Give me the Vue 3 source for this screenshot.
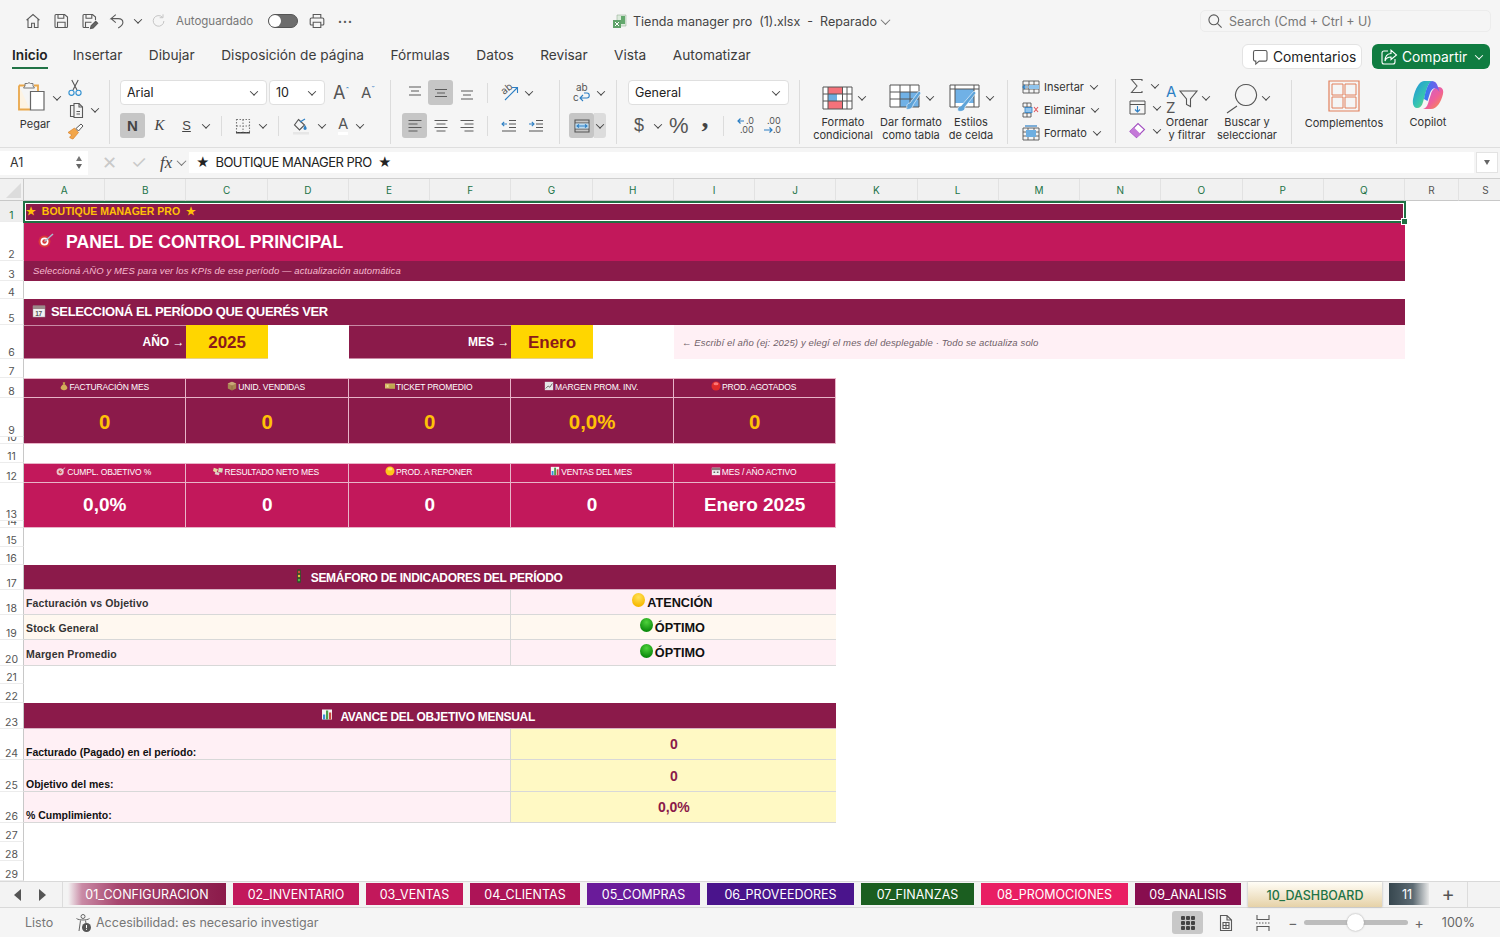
<template>
  <div class="app">
    <!-- barra de titulo -->
    <header class="titlebar">
      <div class="qa">
        <svg class="i" width="18" height="18" viewBox="0 0 18 18" v-html="ico.home"></svg>
        <svg class="i" width="18" height="18" viewBox="0 0 18 18" v-html="ico.save"></svg>
        <svg class="i" width="18" height="18" viewBox="0 0 18 18" v-html="ico.saveas"></svg>
        <svg class="i" width="18" height="18" viewBox="0 0 18 18" v-html="ico.undo"></svg>
        <span class="chev qa-chev"></span>
        <svg class="i redo" width="16" height="16" viewBox="0 0 18 18" v-html="ico.redo"></svg>
        <span class="auto">Autoguardado</span>
        <span class="toggle"><span class="knob"></span></span>
        <svg class="i" width="18" height="18" viewBox="0 0 18 18" v-html="ico.print"></svg>
        <span class="dots">•••</span>
      </div>
      <div class="doc">
        <svg width="16" height="16" viewBox="0 0 16 16" v-html="ico.xl"></svg>
        <span>Tienda manager pro&nbsp; (1).xlsx&nbsp; -&nbsp; Reparado</span>
        <span class="chev thin"></span>
      </div>
      <div class="search">
        <svg class="i" width="16" height="16" viewBox="0 0 16 16" v-html="ico.lens"></svg>
        <span>Search (Cmd + Ctrl + U)</span>
      </div>
    </header>

    <!-- pestañas del ribbon -->
    <nav class="menu">
      <span v-for="(m, n) in menu" :key="m" class="menu-item" :class="{ on: n === 0 }">{{ m }}</span>
      <div class="menu-right">
        <button class="btn-com">
          <svg class="i" width="18" height="18" viewBox="0 0 18 18" v-html="ico.comment"></svg>Comentarios
        </button>
        <button class="btn-share">
          <svg width="18" height="18" viewBox="0 0 18 18" v-html="ico.share"></svg>Compartir<span class="chev white"></span>
        </button>
      </div>
    </nav>

    <!-- ribbon -->
    <section class="ribbon">
      <div class="grp g-clip">
        <div class="paste">
          <svg width="32" height="34" viewBox="0 0 32 34" v-html="ico.paste"></svg>
          <span>Pegar</span>
        </div>
        <span class="chev paste-chev"></span>
        <div class="clip-tools">
          <svg width="16" height="18" viewBox="0 0 16 18" v-html="ico.cut"></svg>
          <div class="row-c">
            <svg class="i" width="18" height="18" viewBox="0 0 18 18" v-html="ico.copy"></svg><span class="chev"></span>
          </div>
          <svg width="17" height="17" viewBox="0 0 17 17" v-html="ico.brush"></svg>
        </div>
      </div>

      <div class="grp g-font">
        <div class="rb-row">
          <div class="select font-sel">Arial<span class="chev"></span></div>
          <div class="select size-sel">10<span class="chev"></span></div>
          <span class="big-a">A<sup>ˆ</sup></span>
          <span class="big-a small">A<sup>ˇ</sup></span>
        </div>
        <div class="rb-row second">
          <span class="cell-btn active bold">N</span>
          <span class="cell-btn ital">K</span>
          <span class="cell-btn under">S</span>
          <span class="chev"></span>
          <i class="vsep s1"></i>
          <svg class="i" width="18" height="18" viewBox="0 0 18 18" v-html="ico.borders"></svg>
          <span class="chev c2"></span>
          <i class="vsep s2"></i>
          <svg width="18" height="18" viewBox="0 0 18 18" v-html="ico.fill"></svg>
          <span class="chev c3"></span>
          <span class="font-color">A</span>
          <span class="chev c3"></span>
        </div>
      </div>

      <div class="grp g-align">
        <div class="rb-row">
          <span class="cell-btn"><svg class="i" width="18" height="18" viewBox="0 0 18 18" v-html="ico.vtop"></svg></span>
          <span class="cell-btn active"><svg class="i" width="18" height="18" viewBox="0 0 18 18" v-html="ico.vmid"></svg></span>
          <span class="cell-btn"><svg class="i" width="18" height="18" viewBox="0 0 18 18" v-html="ico.vbot"></svg></span>
          <i class="vsep s3"></i>
          <svg width="20" height="20" viewBox="0 0 20 20" v-html="ico.orient"></svg>
          <span class="chev"></span>
        </div>
        <div class="rb-row">
          <span class="cell-btn active"><svg class="i" width="18" height="18" viewBox="0 0 18 18" v-html="ico.left"></svg></span>
          <span class="cell-btn"><svg class="i" width="18" height="18" viewBox="0 0 18 18" v-html="ico.center"></svg></span>
          <span class="cell-btn"><svg class="i" width="18" height="18" viewBox="0 0 18 18" v-html="ico.right"></svg></span>
          <i class="vsep s3"></i>
          <svg width="18" height="18" viewBox="0 0 18 18" v-html="ico.indL"></svg>
          <svg class="ind2" width="18" height="18" viewBox="0 0 18 18" v-html="ico.indR"></svg>
        </div>
      </div>

      <div class="grp g-wrap">
        <div class="rb-row wrap-row">
          <svg width="20" height="22" viewBox="0 0 20 22" v-html="ico.wrap"></svg>
          <span class="chev"></span>
        </div>
        <div class="rb-row merge">
          <span class="cell-btn active"><svg width="18" height="18" viewBox="0 0 18 18" v-html="ico.merge"></svg></span>
          <span class="merge-drop"><span class="chev"></span></span>
        </div>
      </div>

      <div class="grp g-num">
        <div class="select num-sel">General<span class="chev"></span></div>
        <div class="rb-row num-row">
          <span class="cur">$</span><span class="chev"></span>
          <span class="pct">%</span>
          <span class="comma">,</span>
          <i class="vsep s4"></i>
          <svg width="20" height="20" viewBox="0 0 20 20" v-html="ico.decUp"></svg>
          <svg class="dec2" width="20" height="20" viewBox="0 0 20 20" v-html="ico.decDn"></svg>
        </div>
      </div>

      <div class="grp g-styles">
        <div class="st st1">
          <div class="st-ico"><svg width="32" height="24" viewBox="0 0 32 24" v-html="ico.cond"></svg><span class="chev"></span></div>
          <span>Formato<br>condicional</span>
        </div>
        <div class="st st2">
          <div class="st-ico"><svg width="33" height="29" viewBox="0 0 33 29" v-html="ico.tbl"></svg><span class="chev"></span></div>
          <span>Dar formato<br>como tabla</span>
        </div>
        <div class="st st3">
          <div class="st-ico"><svg width="33" height="29" viewBox="0 0 33 29" v-html="ico.cellst"></svg><span class="chev"></span></div>
          <span>Estilos<br>de celda</span>
        </div>
      </div>

      <div class="grp g-cells">
        <div class="c-row"><svg width="18" height="16" viewBox="0 0 18 16" v-html="ico.ins"></svg>Insertar<span class="chev"></span></div>
        <div class="c-row"><svg width="18" height="16" viewBox="0 0 18 16" v-html="ico.del"></svg>Eliminar<span class="chev"></span></div>
        <div class="c-row"><svg width="18" height="16" viewBox="0 0 18 16" v-html="ico.fmt"></svg>Formato<span class="chev"></span></div>
      </div>

      <div class="grp g-edit">
        <div class="edit-tools">
          <div class="row-c"><svg class="i" width="16" height="16" viewBox="0 0 16 16" v-html="ico.sum"></svg><span class="chev"></span></div>
          <div class="row-c"><svg width="18" height="16" viewBox="0 0 18 16" v-html="ico.filld"></svg><span class="chev"></span></div>
          <div class="row-c"><svg width="18" height="17" viewBox="0 0 18 17" v-html="ico.eraser"></svg><span class="chev"></span></div>
        </div>
        <div class="st st4">
          <div class="st-ico"><svg width="32" height="31" viewBox="0 0 32 31" v-html="ico.sort"></svg><span class="chev"></span></div>
          <span>Ordenar<br>y filtrar</span>
        </div>
        <div class="st st5">
          <div class="st-ico"><svg width="33" height="31" viewBox="0 0 33 31" v-html="ico.find"></svg><span class="chev"></span></div>
          <span>Buscar y<br>seleccionar</span>
        </div>
      </div>

      <div class="grp g-add">
        <svg width="32" height="32" viewBox="0 0 32 32" v-html="ico.addins"></svg>
        <span>Complementos</span>
      </div>

      <div class="grp g-cop">
        <svg width="32" height="30" viewBox="0 0 32 30" v-html="ico.copilot"></svg>
        <span>Copilot</span>
      </div>
    </section>

    <!-- barra de formulas -->
    <section class="formula">
      <div class="namebox">A1<span class="spin"><i class="up"></i><i class="dn"></i></span></div>
      <div class="fx-btns">
        <span class="fx-x">✕</span>
        <span class="fx-ok">✓</span>
        <span class="fx">fx</span>
        <span class="chev thin"></span>
      </div>
      <div class="fx-input">★&nbsp; BOUTIQUE MANAGER PRO&nbsp; ★</div>
      <div class="fx-drop"><i class="dn"></i></div>
    </section>

    <!-- hoja -->
    <main class="sheet">
      <div class="corner"><i></i></div>
      <div v-for="(c, n) in columns" :key="c" class="col-h" :class="{ sel: n < 17 }">{{ c }}</div>
      <div
        v-for="(h, n) in rowHeights"
        :key="n"
        class="row-h"
        :class="{ sel: n === 0 }"
        :style="{ gridRow: n + 2 }"
      >{{ n + 1 }}</div>

      <div class="c dark banner" :style="at(1, 1, 17)">★&nbsp; BOUTIQUE MANAGER PRO&nbsp; ★</div>
      <div class="c mid title" :style="at(2, 1, 17)">
        <svg class="emo-target" width="16" height="16" viewBox="0 0 16 16" v-html="emoji.target"></svg>PANEL DE CONTROL PRINCIPAL
      </div>
      <div class="c dark subtitle" :style="at(3, 1, 17)">Seleccioná AÑO y MES para ver los KPIs de ese período — actualización automática</div>
      <div class="c dark period" :style="at(5, 1, 17)">
        <svg width="14" height="14" viewBox="0 0 14 14" v-html="emoji.calendar"></svg>SELECCIONÁ EL PERÍODO QUE QUERÉS VER
      </div>

      <div class="c dark arrow-label" :style="at(6, 1, 2)">AÑO →</div>
      <div class="c gold" :style="at(6, 3, 1)">2025</div>
      <div class="c dark arrow-label" :style="at(6, 5, 2)">MES →</div>
      <div class="c gold" :style="at(6, 7, 1)">Enero</div>
      <div class="c hint" :style="at(6, 9, 9)">← Escribí el año (ej: 2025) y elegí el mes del desplegable · Todo se actualiza solo</div>

      <template v-for="(k, n) in kpiTop" :key="k.label">
        <div class="c dark kpi-h" :style="at(8, n * 2 + 1, 2)">
          <svg width="10" height="10" viewBox="0 0 12 12" v-html="emoji[k.icon]"></svg>{{ k.label }}
        </div>
        <div class="c dark kpi-v yellow" :style="at(9, n * 2 + 1, 2, 2)">{{ k.value }}</div>
      </template>
      <template v-for="(k, n) in kpiBottom" :key="k.label">
        <div class="c mid kpi-h" :style="at(12, n * 2 + 1, 2)">
          <svg width="10" height="10" viewBox="0 0 12 12" v-html="emoji[k.icon]"></svg>{{ k.label }}
        </div>
        <div class="c mid kpi-v white" :style="at(13, n * 2 + 1, 2, 2)">{{ k.value }}</div>
      </template>

      <div class="c dark section" :style="at(17, 1, 10)">
        <svg width="10" height="14" viewBox="0 0 10 14" v-html="emoji.light"></svg>SEMÁFORO DE INDICADORES DEL PERÍODO
      </div>
      <template v-for="(s, n) in semaforo" :key="s.label">
        <div class="c row-label" :class="s.bg" :style="at(18 + n, 1, 6)">{{ s.label }}</div>
        <div class="c row-state" :class="s.bg" :style="at(18 + n, 7, 4)">
          <i class="dot" :class="s.dot"></i>{{ s.state }}
        </div>
      </template>

      <div class="c dark section" :style="at(23, 1, 10)">
        <svg width="12" height="13" viewBox="0 0 12 12" v-html="emoji.bars"></svg>AVANCE DEL OBJETIVO MENSUAL
      </div>
      <template v-for="(a, n) in avance" :key="a.label">
        <div class="c av-label" :style="at(24 + n, 1, 6)">{{ a.label }}</div>
        <div class="c av-value" :style="at(24 + n, 7, 4)">{{ a.value }}</div>
      </template>

      <div class="selection" :style="at(1, 1, 17)"><i></i></div>
    </main>

    <!-- pestañas de hojas -->
    <footer class="tabbar">
      <div class="tab-nav"><i class="tri-l"></i><i class="tri-r"></i></div>
      <div class="tabs">
        <span
          v-for="t in tabs"
          :key="t.name"
          class="tab"
          :class="t.cls"
          :style="{ width: t.w + 'px', background: t.bg }"
        >{{ t.name }}</span>
      </div>
      <span class="tab-add">+</span>
    </footer>

    <!-- barra de estado -->
    <footer class="status">
      <span class="listo">Listo</span>
      <svg width="20" height="20" viewBox="0 0 20 20" v-html="ico.a11y"></svg>
      <span class="a11y">Accesibilidad: es necesario investigar</span>
      <div class="status-right">
        <span class="view-on"><svg width="16" height="16" viewBox="0 0 16 16" v-html="ico.grid"></svg></span>
        <svg class="i v-page" width="16" height="18" viewBox="0 0 16 18" v-html="ico.page"></svg>
        <svg class="i v-break" width="16" height="18" viewBox="0 0 16 18" v-html="ico.pbreak"></svg>
        <span class="zoom-sign minus">−</span>
        <span class="slider"><i></i></span>
        <span class="zoom-sign plus">+</span>
        <span class="pct-zoom">100%</span>
      </div>
    </footer>
  </div>
</template>

<script setup>
const menu = ['Inicio', 'Insertar', 'Dibujar', 'Disposición de página', 'Fórmulas', 'Datos', 'Revisar', 'Vista', 'Automatizar']
const columns = 'ABCDEFGHIJKLMNOPQRS'.split('')
const rowHeights = [21, 39, 20, 18, 26, 34, 19, 20, 39, 7, 19, 20, 38, 7, 19, 18, 25, 25, 25, 26, 18, 19, 26, 31, 32, 31, 19, 19, 20]

// posicion en la grilla: fila, columna (A = 1), cuantas columnas y filas ocupa
const at = (row, col, span, rows = 1) => ({
  gridRow: `${row + 1} / span ${rows}`,
  gridColumn: `${col + 1} / span ${span}`,
})

const kpiTop = [
  { icon: 'bag', label: 'FACTURACIÓN MES', value: '0' },
  { icon: 'box', label: 'UNID. VENDIDAS', value: '0' },
  { icon: 'bill', label: 'TICKET PROMEDIO', value: '0' },
  { icon: 'trend', label: 'MARGEN PROM. INV.', value: '0,0%' },
  { icon: 'red', label: 'PROD. AGOTADOS', value: '0' },
]
const kpiBottom = [
  { icon: 'dart', label: 'CUMPL. OBJETIVO %', value: '0,0%' },
  { icon: 'wings', label: 'RESULTADO NETO MES', value: '0' },
  { icon: 'yellow', label: 'PROD. A REPONER', value: '0' },
  { icon: 'bars', label: 'VENTAS DEL MES', value: '0' },
  { icon: 'calendar2', label: 'MES / AÑO ACTIVO', value: 'Enero 2025' },
]
const semaforo = [
  { label: 'Facturación vs Objetivo', state: 'ATENCIÓN', dot: 'amber', bg: 'pink' },
  { label: 'Stock General', state: 'ÓPTIMO', dot: 'green', bg: 'cream' },
  { label: 'Margen Promedio', state: 'ÓPTIMO', dot: 'green', bg: 'pink' },
]
const avance = [
  { label: 'Facturado (Pagado) en el período:', value: '0' },
  { label: 'Objetivo del mes:', value: '0' },
  { label: '% Cumplimiento:', value: '0,0%' },
]
const tabs = [
  { name: '01_CONFIGURACION', w: 158, bg: 'linear-gradient(90deg, #f3f3f3 0, #c98aa5 14px, #a8476f 50px, #8b1a4a 100%)' },
  { name: '02_INVENTARIO', w: 126, bg: '#c2185b' },
  { name: '03_VENTAS', w: 97, bg: '#c2185b' },
  { name: '04_CLIENTAS', w: 110, bg: '#ad1457' },
  { name: '05_COMPRAS', w: 113, bg: '#6a1b9a' },
  { name: '06_PROVEEDORES', w: 147, bg: '#4a148c' },
  { name: '07_FINANZAS', w: 113, bg: '#1b5e20' },
  { name: '08_PROMOCIONES', w: 147, bg: '#e91e63' },
  { name: '09_ANALISIS', w: 106, bg: '#880e4f' },
  { name: '10_DASHBOARD', w: 134, cls: 'active', bg: 'linear-gradient(180deg, #fffdf6, #e6d2a8)' },
  { name: '11', w: 40, cls: 'fade', bg: 'linear-gradient(90deg, #37474f, #5d6b73 60%, #e8e8e8)' },
]

const line = (d, c = '#555', w = 1.1) => `<path d="${d}" fill="none" stroke="${c}" stroke-width="${w}"/>`
const ico = {
  home: '<path d="M2.5 8.2 9 2.5l6.5 5.7M4 7v8.5h3.6v-4.3h2.8v4.3H14V7"/>',
  save: '<path d="M3 3.5A1 1 0 0 1 4 2.5h8.6L15.5 5v9.5a1 1 0 0 1-1 1H4a1 1 0 0 1-1-1zM6 2.8v3.4h5.8V2.8M5.5 15.3V10.3h7.6v5"/>',
  saveas: '<path d="M3 3.5A1 1 0 0 1 4 2.5h8.6L15.5 5v3M3 3.5v11a1 1 0 0 0 1 1h5M6 2.8v3.4h5.8V2.8M5.5 15v-4.7h6"/><path d="m10.5 16.5.6-2.6 4.6-4.6 2 2-4.6 4.6z" fill="#666"/>',
  undo: '<path d="M7.8 2.6 3 6.6h7.2c3 0 4.7 1.9 4.7 4 0 2.3-2 4-4.7 5.4M3 6.6l4.8 4"/>',
  redo: '<path d="M14.5 9a6 6 0 1 1-1.6-4.2M13.5 1.5v3.8H9.8" stroke="#c4c4c4"/>',
  print: '<path d="M5.2 6V2.5h7.6V6M5 13H3.2a1 1 0 0 1-1-1V7.3a1.3 1.3 0 0 1 1.3-1.3h11a1.3 1.3 0 0 1 1.3 1.3V12a1 1 0 0 1-1 1H13"/><path d="M5.2 10.3h7.6v5.2H5.2z"/>',
  xl: '<path d="M5 2h9v11H5z" fill="#dcebdc" stroke="#9ab49c" stroke-width=".6"/><path d="M9 3h4v8H9z" fill="#63a86d"/><path d="M1 7h8v8H1z" fill="#5fa36a"/><path d="m3 9 4 4m0-4-4 4" stroke="#fff" stroke-width="1"/>',
  lens: '<circle cx="6.8" cy="6.8" r="4.9"/><path d="m10.4 10.4 4.2 4.2"/>',
  comment: '<path d="M2.5 4.2A1.7 1.7 0 0 1 4.2 2.5h10.1A1.7 1.7 0 0 1 16 4.2v7.2a1.7 1.7 0 0 1-1.7 1.7H8.2l-3.4 3v-3H4.2a1.7 1.7 0 0 1-1.7-1.7z"/>',
  share: '<g fill="none" stroke="#fff" stroke-width="1.1"><path d="M8 3H4a2 2 0 0 0-2 2v9a2 2 0 0 0 2 2h9a2 2 0 0 0 2-2v-3"/><path d="M11 2.2 16.5 7 11 11.5V9C8 9 6 10 5 13c0-4.500 2.500-7.200 6-7.500z"/></g>',
  paste: '<path d="M2 5.500h6M17 5.500h4v6M2 5.500v24h11" fill="#fdf3e3" stroke="#e9a74b" stroke-width="1.800"/><path d="M8 6V3.500h2.500a2 2 0 0 1 3 0H16V6l1.500 2h-11z" fill="#f5f5f5" stroke="#777"/><path d="M13.500 11.500h13.500v18.500H13.500z" fill="#fff" stroke="#666" stroke-width="1.200"/>',
  cut: '<g fill="none" stroke-width="1.100"><path d="M4.800 1 10 11M11.200 1 6 11" stroke="#555"/><circle cx="4.500" cy="13.800" r="2.600" stroke="#2f8fd0"/><circle cx="11.500" cy="13.800" r="2.600" stroke="#2f8fd0"/></g>',
  copy: '<path d="M7 4.500H3.500v11H7M7 2.500h5l3.500 3.500v10.500H7z"/><path d="M12 2.500V6h3.500M9.500 10.500h3.500M9.500 13h3.500"/>',
  brush: '<path d="M1 9.500 7.500 5l4 4.500-5.500 6.500c-1.500-.2-3-1-3.500-2l2.500-2z" fill="#f2a64a" stroke="#d9822b" stroke-width=".7"/><path d="m9 5.500 5-4.500 2 2-4.500 5z" fill="#fff" stroke="#555" stroke-width="1"/>',
  borders: '<path d="M2.500 2.500h13v13h-13z" stroke-dasharray="1.500 1.500" stroke="#777"/><path d="M9 2.500v13M2.500 9h13" stroke-dasharray="1.500 1.500" stroke="#777"/><path d="M2 15.800h14" stroke="#333" stroke-width="1.300"/>',
  fill: '<path d="m6.500 2.500 6 5.500-5 5-5-5z" fill="none" stroke="#555" stroke-width="1.100"/><path d="M13 8c1 1.500 1.700 2.500 1.700 3.300a1.600 1.600 0 0 1-3.300 0" fill="#2d7fc4"/><path d="M8 5 13 2" stroke="#2d7fc4" stroke-width="1.200"/><rect x="1" y="15" width="16" height="2.500" fill="#e6e6e6"/>',
  vtop: '<path d="M3 3h12M5 7h8M3 11h12"/>',
  vmid: '<path d="M3 5.500h12M5 9h8M3 12.500h12"/>',
  vbot: '<path d="M3 7h12M5 11h8M3 15h12"/>',
  left: '<path d="M2.500 3.500h13M2.500 7h9M2.500 10.500h13M2.500 14h9"/>',
  center: '<path d="M2.500 3.500h13M4.500 7h9M2.500 10.500h13M4.500 14h9"/>',
  right: '<path d="M2.500 3.500h13M6.500 7h9M2.500 10.500h13M6.500 14h9"/>',
  orient: '<text x="2" y="10" font-size="10" font-family="Inter" fill="#555" transform="rotate(-38 6 8)">ab</text><path d="M5 17 17 5M12 4.500h5.500V10" fill="none" stroke="#2d7fc4" stroke-width="1.100"/>',
  indL: line('M9 3.500h7M9 7h7M9 10.500h7M2 14h14', '#555') + line('M7 7H2m2.200-2.200L2 7l2.200 2.200', '#2d7fc4'),
  indR: line('M9 3.500h7M9 7h7M9 10.500h7M2 14h14', '#555') + line('M2 7h5M4.800 4.800 7 7 4.800 9.200', '#2d7fc4'),
  wrap: '<text x="4" y="9" font-size="10" font-family="Inter" fill="#555">ab</text><text x="1" y="19" font-size="10" font-family="Inter" fill="#555">c</text>' + line('M8 16h7c3 0 3-5 0-5h-3M11 13l-3 3 3 3', '#2d7fc4'),
  merge: line('M2 3h14v12H2zM2 6h14M2 12h14', '#555') + '<rect x="2.500" y="6.500" width="13" height="5" fill="#bcdcf2"/>' + line('M4 9h10M6 7.300 4 9l2 1.700M12 7.300 14 9l-2 1.700', '#2d7fc4'),
  decUp: line('M8 5H2m2.500-2.500L2 5l2.500 2.500', '#2d7fc4', 1.200) + '<text x="10" y="8" font-size="9" font-family="Inter" fill="#555">.0</text><text x="4" y="17" font-size="9" font-family="Inter" fill="#555">.00</text>',
  decDn: '<text x="4" y="8" font-size="9" font-family="Inter" fill="#555">.00</text><text x="10" y="17" font-size="9" font-family="Inter" fill="#555">.0</text>' + line('M1 14h8m-2.500-2.500L9 14l-2.500 2.500', '#2d7fc4', 1.200),
  cond: '<path d="M1 1h29v22H1z" fill="#fff"/><path d="M6 1h14v7H6z" fill="#f4727a"/><path d="M6 8h9v7H6z" fill="#6eaee0"/><path d="M15 8h6v7h-6z" fill="#fff"/><path d="M6 15h15v8H6z" fill="#f4727a"/>' + line('M1 1h29v22H1zM1 8h29M1 15h29M6 1v22M20.500 1v22M25 1v22', '#555', 1),
  tbl: '<path d="M1 1h29v22H1z" fill="#fff"/><path d="M11 8h19v15H11z" fill="#70b1e6"/>' + line('M1 1h29v22H1zM1 8h29M1 15h29M11 1v22M21 1v22', '#555', 1) + '<path d="M18 24c-1-3 1-5 3-5l9-12 2 2-8 12c0 3-3 5-7 4" fill="#5ea3d8" stroke="#fff" stroke-width=".6"/>',
  cellst: '<path d="M1 1h29v22H1z" fill="#fff"/><path d="M6 5h19v14H6z" fill="#70b1e6"/>' + line('M1 1h29v22H1zM1 5h29M6 1v22M25 1v22', '#555', 1) + '<path d="M9 27c-1-3 1-5 3-5l13-15 2 2-11 14c0 4-3 5-7 4" fill="#5ea3d8" stroke="#fff" stroke-width=".6"/>',
  ins: line('M1 2h16v12H1zM1 6h16M1 10h16M7 2v12M12 2v12', '#555', .9) + '<rect x="7" y="6" width="10" height="4" fill="#8fc4ee"/>' + line('M6 8H1m2-2L1 8l2 2', '#2d7fc4', 1.100),
  del: line('M1 1h8v4H1zM1 11h8v4H1zM5 1v4M5 11v4', '#555', .9) + '<rect x="3" y="5.500" width="7" height="5" fill="#8fc4ee" stroke="#2d7fc4" stroke-width=".8"/>' + line('m12 5 4 5m0-5-4 5', '#e0555c', 1.100),
  fmt: line('M1 3h16v12H1zM1 7h16M1 11h16M6 3v12M12 3v12', '#555', .9) + '<rect x="4" y="5" width="10" height="7" fill="#6eaee0"/>' + line('M3 1h12', '#2d7fc4', 1.200),
  sum: '<path d="M13 3V1.500H2.500L8 8l-5.500 6.500H13V13"/>',
  filld: line('M1 1h15v13H1zM1 4.500h15', '#555', 1) + line('M8.500 6v6M6 9.500l2.500 2.500L11 9.500', '#2d7fc4', 1.100),
  eraser: '<path d="M1 9.500 9 1.500l6.500 6-8 8z" fill="#fff" stroke="#a24fc0" stroke-width="1.100"/><path d="M5 5.500 12 12.500 7.500 15.500 1 9.500z" fill="#c479d8"/>',
  sort: '<text x="0" y="14" font-size="15" font-family="Inter" fill="#2d7fc4">A</text><text x="0" y="30" font-size="15" font-family="Inter" fill="#555">Z</text>' + line('M14 8h17l-6.500 8v7.500l-4-2V16z', '#555', 1.100),
  find: line('M21 1.500a10.500 10.500 0 1 0 .001 0M12 23 2 30', '#555', 1.100),
  addins: line('M1 1h30v30H1z', '#e2805c', 1.200) + line('M4 4h11v11H4zM17 4h11v11H17zM4 17h11v11H4zM17 17h11v11H17z', '#e2805c', 1),
  copilot: '<defs><linearGradient id="cpa" x1="0" y1="0" x2="1" y2="1"><stop offset="0" stop-color="#1f8fe0"/><stop offset=".55" stop-color="#37c6b0"/><stop offset="1" stop-color="#a4d63c"/></linearGradient><linearGradient id="cpb" x1="0" y1="0" x2="1" y2="1"><stop offset="0" stop-color="#c25fd6"/><stop offset=".55" stop-color="#ef5f9b"/><stop offset="1" stop-color="#f9963a"/></linearGradient><linearGradient id="cpc" x1="0" y1="0" x2="1" y2="0"><stop offset="0" stop-color="#2f7cf0"/><stop offset="1" stop-color="#7f5ae8"/></linearGradient></defs><path d="M12 1h8C16 3 15 8 13 15l-2 7c-1 4-3 6-6 6-4 0-5-6-3.500-11C3 10 7 1 12 1z" fill="url(#cpa)"/><path d="M27 7c3 0 5 3 4 7-2 8-6 15-12 15h-8c4-1 5-5 6-9l2-6c1-4 4-7 8-7z" fill="url(#cpb)"/><path d="M20 1c3 0 5 2 6 6l1.500 5c-3.500-6-7.500-4-9.500 1l-2.500 8-3.500-2c1-6 3-12 5-15.500C18 2 19 1 20 1z" fill="url(#cpc)"/>',
  a11y: line('M7 3.500a2 2 0 1 0 4 0 2 2 0 1 0-4 0M2.500 5.500C5 7.500 13 7.500 15.500 5.500M6.500 7.500 6 11l-1 7M11.500 7.500l.5 3', '#666', 1) + '<circle cx="12.500" cy="14.500" r="4.500" fill="#555"/><path d="M12.500 12v3.200M12.500 16.200v.8" stroke="#fff"/>',
  grid: '<g fill="#444"><rect x="1" y="1" width="4" height="4" rx="1"/><rect x="6" y="1" width="4" height="4" rx="1"/><rect x="11" y="1" width="4" height="4" rx="1"/><rect x="1" y="6" width="4" height="4" rx="1"/><rect x="6" y="6" width="4" height="4" rx="1"/><rect x="11" y="6" width="4" height="4" rx="1"/><rect x="1" y="11" width="4" height="4" rx="1"/><rect x="6" y="11" width="4" height="4" rx="1"/><rect x="11" y="11" width="4" height="4" rx="1"/></g>',
  page: '<path d="M2.500 1.500h6.500l4.500 4.500v10.500h-11zM9 1.500V6h4.500"/><path d="M5 8.500h6v6H5zM5 11.500h6M8 8.500v6"/>',
  pbreak: '<path d="M2 1v4.500h12V1M2 17v-4.500h12V17"/><path d="M1 9h14" stroke-dasharray="1.500 1.500"/>',
}

const emoji = {
  target: '<circle cx="6.500" cy="9.500" r="6" fill="#d93a3a"/><circle cx="6.500" cy="9.500" r="4" fill="#fff"/><circle cx="6.500" cy="9.500" r="2.200" fill="#d93a3a"/><path d="M6.500 9.500 15 2" stroke="#a9bccf" stroke-width="1.500"/>',
  calendar: '<rect x="1" y="2" width="12" height="11" fill="#f1f1f1" stroke="#999" stroke-width=".5"/><rect x="1" y="1.500" width="12" height="3.500" fill="#9c8a8a"/><text x="3.200" y="11.500" font-size="6.500" font-weight="700" font-family="Liberation Sans" fill="#555">17</text>',
  calendar2: '<rect x="1" y="2" width="10" height="9" fill="#eee"/><rect x="1" y="2" width="10" height="3" fill="#8f7a80"/><path d="M3 6.500h2v2H3zM7 6.500h2v2H7z" fill="#666"/>',
  bag: '<path d="M4.500 1.500h3L7 4H5z" fill="#c9a24a"/><path d="M5 4h2c2 1.500 3 3 3 4.500S8.500 11 6 11 2 10 2 8.500 3 5.500 5 4z" fill="#d2ad5a"/>',
  box: '<path d="M6 .8 11 3v6l-5 2.400L1 9V3z" fill="#a98453"/><path d="M6 .8 11 3 6 5.400 1 3z" fill="#c9a878"/><path d="M6 5.400v6" stroke="#6f5431" stroke-width=".5"/>',
  bill: '<rect x="0" y="3" width="12" height="6" fill="#d8c06a"/><rect x="5" y="4" width="7" height="5" fill="#bfa84f"/><circle cx="3" cy="6" r="1" fill="#f3e9b0"/>',
  trend: '<rect x="1" y="1" width="10" height="10" fill="#e6e6e6"/><path d="m2 9 3-3 2 1.500L10 3" stroke="#555" fill="none"/>',
  red: '<circle cx="6" cy="6" r="5.400" fill="#e02b2b"/><ellipse cx="6" cy="3.400" rx="3" ry="1.800" fill="#f77"/>',
  dart: '<circle cx="5" cy="7" r="4.300" fill="#e8c4cf"/><circle cx="5" cy="7" r="2" fill="#d93a3a"/><path d="M5 7 11 2" stroke="#ddd"/>',
  wings: '<path d="M1 2 6 4 4 8 0 6z" fill="#e6d9a2"/><path d="M7 2l5 1-1 5-5-1z" fill="#d2e0b8"/><path d="M3 7l5 1-1 3-5-1z" fill="#dcc"/>',
  yellow: '<circle cx="6" cy="6" r="5.400" fill="#ffc61a"/><ellipse cx="6" cy="3.600" rx="3" ry="1.800" fill="#ffe272"/>',
  bars: '<rect x="1" y="1" width="10" height="10" fill="#f4f4f4"/><rect x="2" y="6" width="2.200" height="5" fill="#3a8ed8"/><rect x="5" y="2" width="2.200" height="9" fill="#4ca04c"/><rect x="8" y="4" width="2.200" height="7" fill="#d0453f"/>',
  light: '<rect x="3" y="0" width="4" height="14" rx="1.500" fill="#3e4a2e"/><circle cx="5" cy="3" r="1.200" fill="#d64b3a"/><circle cx="5" cy="7" r="1.200" fill="#e8c23a"/><circle cx="5" cy="11" r="1.200" fill="#4fbb46"/>',
}
</script>

<style>
html, body {
  margin: 0;
  background: #fff;
}
</style>

<style scoped>
.app {
  width: 1500px;
  height: 937px;
  overflow: hidden;
  display: flex;
  flex-direction: column;
  background: #f5f5f5;
  font-family: Inter, "Noto Sans", sans-serif;
  color: #333;
}

.i {
  fill: none;
  stroke: #5a5a5a;
  stroke-width: 1.1;
  flex: none;
}

svg {
  flex: none;
  overflow: visible;
}

/* chevron chico de los desplegables */
.chev {
  display: inline-block;
  width: 5px;
  height: 5px;
  border-right: 1.4px solid #444;
  border-bottom: 1.4px solid #444;
  transform: rotate(45deg) translate(-1px, -1px);
  flex: none;
}

.chev.thin {
  border-color: #777;
  border-width: 1px;
  width: 6px;
  height: 6px;
}

.chev.white {
  border-color: #fff;
  border-width: 1.1px;
  margin-left: 5px;
}

/* barra de titulo */
.titlebar {
  height: 40px;
  box-sizing: border-box;
  padding-top: 2px;
  display: flex;
  align-items: center;
  flex: none;
}

.qa {
  width: 612px;
  padding-left: 24px;
  box-sizing: border-box;
  display: flex;
  align-items: center;
  gap: 10px;
}

.qa-chev {
  margin-left: -1px;
}

.redo {
  margin-left: 0;
}

.auto {
  font-size: 11.5px;
  color: #777;
  margin-left: -1px;
  width: 82px;
  white-space: nowrap;
}

.toggle {
  width: 30px;
  height: 14px;
  border-radius: 8px;
  background: #6d6d6d;
  padding: 1px;
  box-sizing: border-box;
  border: 1px solid #555;
  display: flex;
}

.knob {
  width: 12px;
  height: 12px;
  margin: -1px 0 0 -1px;
  border-radius: 50%;
  background: #fff;
}

.dots {
  font-size: 7px;
  letter-spacing: 1px;
  color: #555;
  margin-left: 2px;
}

.doc {
  width: 588px;
  display: flex;
  align-items: center;
  gap: 5px;
  font-size: 12.5px;
  color: #444;
  white-space: nowrap;
}

.doc .chev {
  margin-left: 0;
}

.search {
  width: 291px;
  height: 22px;
  box-sizing: border-box;
  border: 1px solid #ececec;
  border-radius: 5px;
  display: flex;
  align-items: center;
  gap: 6px;
  padding-left: 6px;
  font-size: 12.5px;
  color: #777;
}

/* menu */
.menu {
  height: 30px;
  display: flex;
  align-items: flex-start;
  padding-left: 12px;
  gap: 26.5px;
  font-size: 13.7px;
  flex: none;
  position: relative;
}

.menu-item {
  height: 27px;
  line-height: 31px;
  color: #3c3c3c;
  white-space: nowrap;
}

.menu-item.on {
  font-weight: 600;
  color: #222;
  border-bottom: 2.5px solid #217346;
  margin-right: -1.5px;
}

.menu-right {
  margin-left: auto;
  display: flex;
  gap: 10px;
  padding: 4px 10px 0 0;
}

.btn-com,
.btn-share {
  height: 25px;
  border-radius: 6px;
  font: 13.8px Inter, sans-serif;
  display: flex;
  align-items: center;
  gap: 4px;
  padding: 0 8px;
  box-sizing: border-box;
}

.btn-com {
  width: 120px;
  background: #fff;
  border: 1px solid #e3e3e3;
  color: #222;
}

.btn-share {
  width: 118px;
  background: #107c41;
  border: none;
  color: #fff;
}

/* ribbon */
.ribbon {
  height: 78px;
  flex: none;
  display: flex;
  box-sizing: border-box;
  padding-top: 10px;
  border-bottom: 1px solid #dedede;
  font-size: 11px;
  color: #333;
}

.grp {
  height: 64px;
  box-sizing: border-box;
  border-right: 1px solid #dcdcdc;
  flex: none;
  position: relative;
}

.g-clip {
  width: 110px;
  display: flex;
  padding-left: 17px;
}

.paste {
  width: 36px;
  display: flex;
  flex-direction: column;
  align-items: center;
  gap: 3px;
}

.paste svg {
  margin-left: -4px;
}

.paste-chev {
  margin: 15px 0 0 1px;
}

.clip-tools {
  margin-left: 7px;
  display: flex;
  flex-direction: column;
  align-items: flex-start;
  gap: 4px;
  margin-top: -1px;
}

.row-c {
  display: flex;
  align-items: center;
  gap: 7px;
}

.g-font {
  width: 281px;
  padding-left: 10px;
}

.rb-row {
  display: flex;
  align-items: center;
  height: 25px;
}

.rb-row + .rb-row {
  margin-top: 8px;
}

.select {
  height: 25px;
  background: #fff;
  border: 1px solid #dfdfdf;
  border-radius: 4px;
  box-sizing: border-box;
  display: flex;
  align-items: center;
  justify-content: space-between;
  padding: 0 9px 0 6px;
  font-size: 12.5px;
  color: #222;
}

.font-sel {
  width: 147px;
}

.size-sel {
  width: 56px;
  margin-left: 2px;
}

.big-a {
  font-size: 18px;
  color: #555;
  margin-left: 8px;
  width: 20px;
  white-space: nowrap;
}

.big-a sup {
  font-size: 9px;
  color: #2d7fc4;
  vertical-align: 5px;
  line-height: 0;
}

.big-a.small {
  font-size: 15px;
  margin-left: 8px;
}

.cell-btn {
  width: 25px;
  height: 25px;
  border-radius: 3px;
  display: flex;
  align-items: center;
  justify-content: center;
  flex: none;
  font: 15px "Liberation Serif", serif;
  color: #444;
}

.cell-btn.active {
  background: #c6c6c6;
}

.bold {
  font: 700 15px "Liberation Sans", sans-serif;
}

.ital {
  font-style: italic;
  margin-left: 2px;
}

.under {
  text-decoration: underline;
  font-family: "Liberation Sans", sans-serif;
  font-size: 13px;
  margin-left: 2px;
}

.vsep {
  width: 1px;
  height: 20px;
  background: #dcdcdc;
  display: block;
  flex: none;
}

.second .chev {
  margin-left: 4px;
}

.s1 {
  margin: 0 12px 0 12px;
}

.c2 {
  margin-left: 8px !important;
}

.s2 {
  margin: 0 13px 0 12px;
}

.c3 {
  margin-left: 9px !important;
}

.font-color {
  font-size: 15px;
  color: #555;
  margin-left: 13px;
  border-bottom: 3px solid #fff;
  line-height: 16px;
}

.g-align {
  width: 169px;
  padding-left: 11px;
}

.g-align .cell-btn {
  margin-right: 1px;
}

.g-align .s3 {
  margin: 0 12px 0 7px;
}

.g-align .rb-row .chev {
  margin-left: 6px;
}

.ind2 {
  margin-left: 9px;
}

.g-wrap {
  width: 57px;
  padding-left: 9px;
}

.wrap-row svg {
  margin-left: 3px;
}

.g-wrap .rb-row .chev {
  margin-left: 6px;
}

.merge-drop {
  width: 12px;
  height: 25px;
  background: #dcdcdc;
  border-radius: 0 3px 3px 0;
  display: flex;
  align-items: center;
  justify-content: center;
}

.g-wrap .merge .chev {
  margin-left: 0;
}

.g-num {
  width: 183px;
  padding-left: 11px;
}

.num-sel {
  width: 161px;
}

.num-row {
  margin-top: 8px;
  padding-left: 6px;
}

.cur {
  font: 18px "Liberation Sans", sans-serif;
  color: #555;
}

.num-row .chev {
  margin-left: 11px;
}

.pct {
  font: 22px "Liberation Sans", sans-serif;
  color: #555;
  margin-left: 8px;
}

.comma {
  font: 700 28px "Liberation Serif", serif;
  color: #444;
  margin: -16px 0 0 13px;
}

.s4 {
  margin: 0 12px 0 14px;
}

.dec2 {
  margin-left: 7px;
}

.g-styles {
  width: 208px;
  display: flex;
  padding-left: 12px;
}

.st {
  display: flex;
  flex-direction: column;
  align-items: center;
  text-align: center;
  line-height: 12.5px;
  font-size: 11px;
  white-space: nowrap;
}

.st-ico {
  height: 36px;
  display: flex;
  align-items: center;
  gap: 5px;
}

.st1 {
  width: 62px;
}

.st2 {
  width: 66px;
  margin-left: 4px;
}

.st3 {
  width: 48px;
  margin-left: 3px;
}

.g-cells {
  width: 108px;
  margin-top: -1px;
  padding: 0 0 0 14px;
  display: flex;
  flex-direction: column;
  gap: 7px;
}

.c-row {
  height: 16px;
  display: flex;
  align-items: center;
  font-size: 11px;
  gap: 4px;
}

.c-row .chev {
  margin-left: 3px;
}

.g-edit {
  width: 176px;
  display: flex;
  padding-left: 13px;
}

.edit-tools {
  display: flex;
  flex-direction: column;
  gap: 6px;
  width: 33px;
  margin-top: -2px;
}

.st4 {
  width: 50px;
}

.st5 {
  width: 60px;
  margin-left: 5px;
}

.g-add {
  width: 105px;
  display: flex;
  flex-direction: column;
  align-items: center;
  gap: 4px;
  font-size: 11px;
}

.g-cop {
  width: 62px;
  border: none;
  display: flex;
  flex-direction: column;
  align-items: center;
  gap: 5px;
  font-size: 11px;
}

/* formula */
.formula {
  height: 31px;
  flex: none;
  display: flex;
  align-items: center;
  box-sizing: border-box;
  padding: 1px 2px 2px 0;
  border-bottom: 1px solid #cfcfcf;
}

.namebox {
  width: 88px;
  height: 24px;
  background: #fff;
  box-sizing: border-box;
  padding: 0 6px 0 10px;
  font-size: 12.5px;
  display: flex;
  align-items: center;
  justify-content: space-between;
}

.spin {
  display: flex;
  flex-direction: column;
  gap: 3px;
}

.up {
  border: 3.5px solid transparent;
  border-bottom: 5px solid #777;
  border-top: 0;
  display: block;
}

.dn {
  border: 3.5px solid transparent;
  border-top: 5px solid #666;
  border-bottom: 0;
  display: block;
}

.fx-btns {
  width: 101px;
  flex: none;
  display: flex;
  align-items: center;
  box-sizing: border-box;
  padding-left: 14px;
  color: #c9c9c9;
  font-size: 18px;
}

.fx-ok {
  margin-left: 14px;
}

.fx {
  font: italic 17px "Liberation Serif", serif;
  color: #444;
  margin-left: 13px;
}

.fx-btns .chev {
  margin-left: 6px;
}

.fx-input {
  flex: 1;
  height: 21px;
  background: #fff;
  font: 13px/21px Inter, sans-serif;
  padding-left: 7px;
  color: #222;
  white-space: nowrap;
  letter-spacing: -0.5px;
}

.fx-drop {
  width: 22px;
  height: 21px;
  margin-left: 2px;
  background: #fff;
  border: 1px solid #e3e3e3;
  box-sizing: border-box;
  display: flex;
  align-items: center;
  justify-content: center;
}

/* hoja */
.sheet {
  height: 702px;
  flex: none;
  background: #fff;
  overflow: hidden;
  display: grid;
  grid-template-columns: 24px repeat(17, 81.24px) 54px 54px;
  grid-template-rows: 22px 21px 39px 20px 18px 26px 34px 19px 20px 39px 7px 19px 20px 38px 7px 19px 18px 25px 25px 25px 26px 18px 19px 26px 31px 32px 31px 19px 19px 20px;
  position: relative;
  font-family: "Liberation Sans", Arial, sans-serif;
}

.corner {
  grid-area: 1 / 1;
  background: #f1f1f1;
  border-right: 1px solid #c8c8c8;
  border-bottom: 1px solid #c8c8c8;
  position: relative;
}

.corner i {
  position: absolute;
  right: 2px;
  bottom: 2px;
  border-left: 15px solid transparent;
  border-bottom: 15px solid #dcdcdc;
}

.col-h {
  grid-row: 1;
  background: #f1f1f1;
  border-right: 1px solid #e2e2e2;
  border-bottom: 1px solid #c8c8c8;
  box-sizing: border-box;
  display: flex;
  align-items: center;
  justify-content: center;
  font: 10px Inter, sans-serif;
  color: #555;
}

.col-h.sel {
  color: #217346;
}

.row-h {
  grid-column: 1;
  background: #fff;
  border-right: 1px solid #c8c8c8;
  border-bottom: 1px solid #ececec;
  box-sizing: border-box;
  display: flex;
  align-items: flex-end;
  justify-content: center;
  font: 10.5px/11px Inter, sans-serif;
  color: #555;
  overflow: hidden;
  padding-bottom: 0;
}

.row-h.sel {
  background: #eeeeee;
  color: #217346;
}

.c {
  min-width: 0;
  box-sizing: border-box;
  display: flex;
  align-items: center;
  white-space: nowrap;
  overflow: hidden;
}

.dark {
  background: #8b1a4a;
  color: #fff;
}

.mid {
  background: #c2185b;
  color: #fff;
}

.banner {
  color: #ffc107;
  font-size: 10.5px;
  font-weight: 700;
  padding: 0 0 2px 2px;
}

.title {
  font-size: 17.6px;
  font-weight: 700;
  padding: 1px 0 0 14px;
}

.emo-target {
  margin-right: 12px;
  margin-top: -4px;
}

.subtitle {
  font-size: 9.5px;
  font-style: italic;
  color: #f8bbd0;
  padding: 0 0 2px 9px;
  letter-spacing: 0.1px;
}

.period {
  font-size: 13px;
  font-weight: 700;
  padding: 0 0 2px 8px;
  gap: 5px;
  letter-spacing: -0.35px;
}

.arrow-label {
  justify-content: flex-end;
  font-size: 12px;
  font-weight: 700;
  padding-right: 2px;
  border-top: 1px solid #c98aa5;
  border-bottom: 1px solid #c98aa5;
}

.gold {
  background: #ffd600;
  color: #8b1a1a;
  font-size: 17px;
  font-weight: 700;
  justify-content: center;
  padding-top: 3px;
  border-bottom: 1px solid #e6d28a;
}

.hint {
  background: #fff0f5;
  color: #6f5f68;
  font-size: 9.5px;
  font-style: italic;
  padding-left: 8px;
  letter-spacing: 0.14px;
}

.kpi-h {
  justify-content: center;
  font-size: 8.5px;
  letter-spacing: -0.15px;
  gap: 1px;
  border: 1px solid #e8b4c8;
  border-left: 0;
  padding: 0 2px 2px 0;
}

.kpi-h svg {
  margin-top: -3px;
}

.kpi-v {
  justify-content: center;
  font-weight: 700;
  border-right: 1px solid #e8b4c8;
  border-bottom: 1px solid #e8b4c8;
}

.yellow {
  color: #ffc107;
  font-size: 20.5px;
  padding-top: 2px;
}

.white {
  color: #fff;
  font-size: 19px;
}

.section {
  justify-content: center;
  font-size: 12px;
  font-weight: 700;
  gap: 7px;
  letter-spacing: -0.3px;
  padding: 2px 4px 0 0;
  border-bottom: 1px solid #d9b3c4;
}

.section svg {
  margin-top: -5px;
}

.row-label {
  font-size: 10.5px;
  font-weight: 700;
  color: #333;
  padding: 2px 0 0 2px;
  letter-spacing: 0.15px;
  border-bottom: 1px solid #d8d8d8;
  border-right: 1px solid #d8d8d8;
}

.row-state {
  justify-content: center;
  font-size: 12.7px;
  font-weight: 700;
  color: #111;
  border-bottom: 1px solid #d8d8d8;
  padding: 1px 3px 0 0;
}

.pink {
  background: #fff0f5;
}

.cream {
  background: #fff8f0;
}

.dot {
  width: 13px;
  height: 14px;
  border-radius: 50%;
  margin: -5px 2px 0 0;
}

.dot.amber {
  background: radial-gradient(circle at 50% 30%, #ffe25a, #f7b900 75%);
}

.dot.green {
  background: radial-gradient(circle at 50% 30%, #4fd23c, #0b8a0b 75%);
}

.av-label {
  background: #fff0f5;
  font-size: 10.5px;
  font-weight: 700;
  color: #111;
  align-items: flex-end;
  padding: 0 0 1px 2px;
  border-bottom: 1px solid #d8d8d8;
  border-right: 1px solid #d8d8d8;
}

.av-value {
  background: #fff9c4;
  color: #8b1a4a;
  font-size: 14px;
  font-weight: 700;
  justify-content: center;
  border-bottom: 1px solid #d8d8d8;
}

.selection {
  position: relative;
  border: 2px solid #1f6f43;
  box-shadow: inset 0 0 0 1px #fff;
  margin: 0 -1px -1px -1px;
}

.selection i {
  position: absolute;
  right: -4px;
  bottom: -4px;
  width: 5px;
  height: 5px;
  background: #1f6f43;
  border: 1px solid #fff;
}

/* pestañas de hojas */
.tabbar {
  height: 27px;
  flex: none;
  display: flex;
  align-items: center;
  background: #f3f3f3;
  border-top: 1px solid #d9d9d9;
  border-bottom: 1px solid #d9d9d9;
  box-sizing: border-box;
}

.tab-nav {
  width: 63px;
  height: 25px;
  flex: none;
  box-sizing: border-box;
  border-right: 1px solid #dcdcdc;
  display: flex;
  align-items: center;
  padding-left: 14px;
  gap: 18px;
}

.tri-l {
  border: 6px solid transparent;
  border-right: 7px solid #555;
  border-left: 0;
}

.tri-r {
  border: 6px solid transparent;
  border-left: 7px solid #555;
  border-right: 0;
}

.tabs {
  display: flex;
  gap: 7px;
  padding-left: 5px;
}

.tab {
  height: 22px;
  box-sizing: border-box;
  color: #fff;
  font: 12.5px/24px Inter, sans-serif;
  text-align: center;
  white-space: nowrap;
  overflow: hidden;
  flex: none;
}

.tab.active {
  color: #217346;
  font-weight: 500;
  height: 25px;
  line-height: 27px;
  margin-top: -1px;
  box-shadow: 0 0 2px #aaa;
}

.tab.fade {
  text-align: left;
  padding-left: 13px;
}

.tab-add {
  margin-left: 0;
  padding: 0 9px;
  width: 20px;
  font-size: 20px;
  line-height: 25px;
  text-align: center;
  color: #555;
  border-right: 1px solid #dcdcdc;
}

/* barra de estado */
.status {
  height: 29px;
  flex: none;
  display: flex;
  align-items: center;
  padding-left: 25px;
  font-size: 12.5px;
  color: #777;
}

.listo {
  width: 49px;
}

.a11y {
  margin-left: 2px;
  white-space: nowrap;
}

.status-right {
  margin-left: auto;
  display: flex;
  align-items: center;
  padding-right: 25px;
}

.view-on {
  width: 31px;
  height: 23px;
  background: #c8c8c8;
  border-radius: 3px;
  display: flex;
  align-items: center;
  justify-content: center;
}

.v-page {
  margin-left: 15px;
}

.v-break {
  margin-left: 21px;
}

.zoom-sign {
  font-size: 14px;
  color: #666;
  margin: 0 6px;
}

.minus {
  margin-left: 17px;
}

.plus {
  margin: 0 7px 0 7px;
}

.slider {
  width: 104px;
  height: 5px;
  background: #bdbdbd;
  border-radius: 3px;
  position: relative;
}

.slider i {
  position: absolute;
  left: 43px;
  top: -6px;
  width: 17px;
  height: 17px;
  border-radius: 50%;
  background: #fff;
  box-shadow: 0 0 2px #999;
}

.pct-zoom {
  margin-left: 11px;
  color: #666;
}
</style>
